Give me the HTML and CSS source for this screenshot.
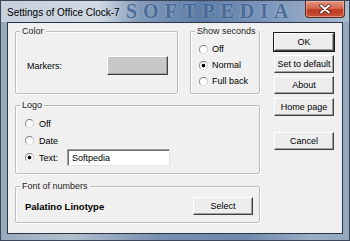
FILE: index.html
```
<!DOCTYPE html>
<html lang="en">
<head>
    <meta charset="UTF-8">
    <title>Settings of Office Clock-7</title>
    <link rel="stylesheet" href="styles.css">
</head>
<body>
    <div class="window">
        <!-- Title bar -->
        <div class="titlebar">
            <span class="title">Settings of Office Clock-7</span>
            <span class="watermark">SOFTPEDIA</span>
            <button class="close-btn" aria-label="Close">
                <svg width="12" height="10" viewBox="0 0 12 10">
                    <path d="M2 1.5 L10 8.5 M10 1.5 L2 8.5" stroke="#3a1a14" stroke-width="3.4" stroke-linecap="round"/>
                    <path d="M2 1.5 L10 8.5 M10 1.5 L2 8.5" stroke="#ffffff" stroke-width="2" stroke-linecap="round"/>
                </svg>
            </button>
        </div>

        <!-- Dialog body -->
        <div class="client">
            <div class="groups">
                <div class="top-row">
                    <fieldset class="group color-group">
                        <legend>Color</legend>
                        <div class="color-body">
                            <span>Markers:</span>
                            <button class="btn swatch" aria-label="Markers color"></button>
                        </div>
                    </fieldset>
                    <fieldset class="group seconds-group">
                        <legend>Show seconds</legend>
                        <div class="radio-list">
                            <label class="radio"><span class="dot"></span>Off</label>
                            <label class="radio"><span class="dot checked"></span>Normal</label>
                            <label class="radio"><span class="dot"></span>Full back</label>
                        </div>
                    </fieldset>
                </div>

                <fieldset class="group logo-group">
                    <legend>Logo</legend>
                    <div class="radio-list">
                        <label class="radio"><span class="dot"></span>Off</label>
                        <label class="radio"><span class="dot"></span>Date</label>
                        <label class="radio"><span class="dot checked"></span>Text:<input class="text-input" type="text" value="Softpedia"></label>
                    </div>
                </fieldset>

                <fieldset class="group font-group">
                    <legend>Font of numbers</legend>
                    <div class="font-body">
                        <strong>Palatino Linotype</strong>
                        <button class="btn">Select</button>
                    </div>
                </fieldset>
            </div>

            <div class="buttons">
                <button class="btn default">OK</button>
                <button class="btn">Set to default</button>
                <button class="btn">About</button>
                <button class="btn">Home page</button>
                <button class="btn cancel">Cancel</button>
            </div>
        </div>
    </div>
</body>
</html>
```

FILE: styles.css
```
* {
    margin: 0;
    padding: 0;
    box-sizing: border-box;
}
:root {
    --face: #f0f0f0;
    --frame-dark: #2a3547;
    --group-line: #bdbdbd;
    --text: #000000;
}
body {
    width: 350px;
    height: 241px;
    overflow: hidden;
    background: #8c9bae;
    font-family: 'Liberation Sans', Arial, sans-serif;
    font-size: 9px;
    color: var(--text);
}
/* Window frame */
.window {
    width: 350px;
    height: 241px;
    border: 1px solid #3a4659;
    padding: 0 6px 6px 6px;
    display: flex;
    flex-direction: column;
    background: linear-gradient(90deg, #9aa9ba 0, #b3bfcd 20%, #7890b0 45%, #7088aa 70%, #9cafc5 90%, #94a6bb 100%);
}
.titlebar {
    position: relative;
    height: 21px;
    display: flex;
    align-items: center;
    justify-content: space-between;
    background: linear-gradient(90deg, #c5d0dc 0, #d0d9e2 28%, #8299b9 40%, #5d7ca6 58%, #7f99bc 78%, #aabcd0 100%);
    margin: 0 -6px;
    padding: 0 0 0 6px;
}
.title {
    position: relative;
    z-index: 2;
    font-size: 10px;
    color: #000;
    padding-top: 1px;
}
.watermark {
    position: absolute;
    left: 125px;
    top: 0;
    font-family: 'Liberation Serif', 'Times New Roman', serif;
    font-size: 20px;
    line-height: 21px;
    font-weight: 700;
    letter-spacing: 6px;
    color: rgba(46, 80, 130, 0.7);
    text-shadow: 0 0 3px rgba(180, 200, 225, 0.6);
    z-index: 1;
}
.close-btn {
    position: relative;
    z-index: 2;
    align-self: flex-start;
    width: 40px;
    height: 17px;
    margin: 0 4px 0 0;
    border: 1px solid #5a2a22;
    border-top: none;
    border-radius: 0 0 4px 4px;
    background: linear-gradient(180deg, #e2937f 0, #d46a50 45%, #bf3a1e 55%, #c9533a 100%);
    box-shadow: inset 0 0 0 1px rgba(255, 220, 200, 0.45);
    display: flex;
    align-items: center;
    justify-content: center;
}
/* Client area */
.client {
    flex: 1;
    background: var(--face);
    border: 1px solid var(--frame-dark);
    display: grid;
    grid-template-columns: 245px 60px;
    column-gap: 14px;
    align-items: start;
    padding: 3px 0 0 7px;
}
.groups {
    display: flex;
    flex-direction: column;
}
.top-row {
    display: flex;
    gap: 12px;
}
.group {
    margin: 0;
    padding: 0;
    min-width: 0;
    border: 1px solid var(--group-line);
    border-radius: 2px;
    box-shadow: inset 1px 1px 0 #fff, 1px 1px 0 #fff;
}
.group legend {
    margin-left: 4px;
    padding: 0 2px;
    line-height: 11px;
    background: var(--face);
    color: #1e1e1e;
}
.color-group {
    width: 163px;
}
.seconds-group {
    width: 70px;
}
.color-body {
    display: flex;
    align-items: center;
    justify-content: space-between;
    padding: 19px 9px 18px 11px;
}
.radio-list {
    display: flex;
    flex-direction: column;
    padding: 4px 0 4px 8px;
}
.radio {
    display: flex;
    align-items: center;
    gap: 4px;
    height: 16px;
}
.dot {
    width: 9px;
    height: 9px;
    border-radius: 50%;
    border: 1px solid;
    border-color: #7a7a7a #c9c9c9 #e2e2e2 #8a8a8a;
    background: #fff;
}
.dot.checked {
    background: radial-gradient(circle, #000 0, #000 1.6px, #fff 2.2px);
}
.logo-group {
    margin-top: 6px;
}
.logo-group .radio-list {
    padding: 4px 0 7px 9px;
}
.logo-group .radio {
    height: 17px;
    gap: 5px;
}
.text-input {
    width: 103px;
    height: 17px;
    margin-left: 4px;
    padding: 0 4px;
    font: inherit;
    color: #000;
    background: #fff;
    border: 1px solid;
    border-color: #9a9a9a #e3e3e3 #e3e3e3 #9a9a9a;
    box-shadow: inset 1px 1px 0 #6d6d6d;
}
.font-group {
    margin-top: 7px;
}
.font-body {
    display: flex;
    align-items: center;
    justify-content: space-between;
    padding: 5px 6px 7px 9px;
}
.font-body strong {
    font-size: 9.5px;
}
/* Push buttons */
.btn {
    width: 60px;
    height: 18px;
    font: inherit;
    color: #000;
    background: #ededed;
    border: 1px solid;
    border-color: #ffffff #404040 #404040 #ffffff;
    box-shadow: inset -1px -1px 0 #a0a0a0;
    cursor: pointer;
}
.btn.swatch {
    width: 61px;
    height: 19px;
    background: #c8c8c8;
}
.btn.default {
    outline: 1px solid #1a1a1a;
    outline-offset: 0;
}
.buttons {
    display: flex;
    flex-direction: column;
    gap: 3.7px;
    margin-top: 7px;
}
.buttons .cancel {
    margin-top: 12px;
}
```
